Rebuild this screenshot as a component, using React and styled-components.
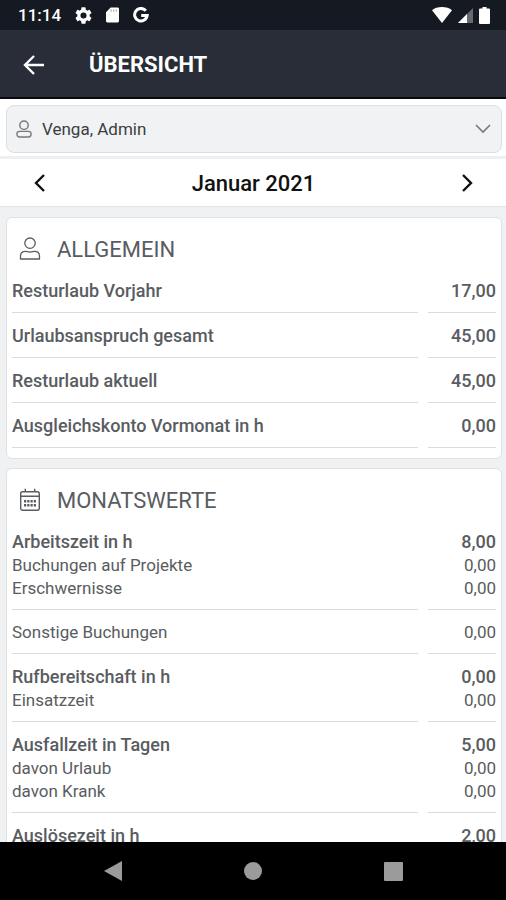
import React, { useState } from 'react';
import styled, { createGlobalStyle } from 'styled-components';

const GlobalStyle = createGlobalStyle`
  * {
    box-sizing: border-box;
  }

  body {
    margin: 0;
    font-family: Roboto, 'Liberation Sans', sans-serif;
    color: #595c61;
    background-color: #eff1f3;
  }

  button {
    display: flex;
    align-items: center;
    justify-content: center;
    padding: 0;
    border: none;
    background: none;
    color: inherit;
    cursor: pointer;
  }

  svg {
    display: block;
    flex-shrink: 0;
  }
`;

const Screen = styled.div`
  display: flex;
  flex-direction: column;
  height: 100vh;
`;

const StatusBar = styled.div`
  display: flex;
  align-items: center;
  justify-content: space-between;
  flex-shrink: 0;
  height: 30px;
  padding: 0 16px 0 18px;
  background-color: #151921;
  color: white;
`;

const StatusGroup = styled.div`
  display: flex;
  align-items: center;
  gap: ${(props) => props.$gap}px;
`;

const Clock = styled.span`
  font-size: 17px;
  line-height: 20px;
  font-weight: 500;
`;

const Header = styled.header`
  display: flex;
  align-items: center;
  flex-shrink: 0;
  gap: 40px;
  height: 69px;
  padding: 3px 19px 0;
  background-color: #282d37;
  border-bottom: 2px solid #08090c;
  color: white;
`;

const Title = styled.h1`
  margin: 0;
  font-size: 22px;
  line-height: 28px;
  font-weight: 700;
`;

const SelectBar = styled.div`
  flex-shrink: 0;
  padding: 6px 4px 3px 6px;
  background-color: white;
  border-bottom: 3px solid #eeeff0;
`;

const SelectBox = styled.label`
  display: flex;
  align-items: center;
  gap: 10px;
  height: 48px;
  padding: 0 10px 0 9px;
  border: 1px solid #dcdee0;
  border-radius: 8px;
  background-color: #f0f2f4;
  color: #77797c;
`;

const Select = styled.select`
  flex: 1;
  min-width: 0;
  padding: 0;
  border: none;
  background: none;
  appearance: none;
  outline: none;
  font-family: inherit;
  font-size: 17px;
  line-height: 24px;
  color: #3c3e41;
`;

const MonthBar = styled.div`
  display: flex;
  align-items: center;
  justify-content: space-between;
  flex-shrink: 0;
  height: 48px;
  padding: 0 24px 0 25px;
  background-color: white;
  border-bottom: 1px solid #e2e4e6;
  color: #111;
`;

const IconButton = styled.button`
  width: 30px;
  height: 30px;
`;

const Month = styled.h2`
  margin: 0;
  padding-top: 2px;
  font-size: 22px;
  line-height: 28px;
  font-weight: 500;
`;

const Content = styled.main`
  display: flex;
  flex-direction: column;
  flex: 1;
  gap: 9px;
  min-height: 0;
  padding: 10px 4px 10px 6px;
  overflow-y: auto;
  scrollbar-width: none;
`;

const Card = styled.section`
  flex-shrink: 0;
  padding: 13px 5px 10px;
  border: 1px solid #dfe2e5;
  border-radius: 6px;
  background-color: white;
`;

const CardHeader = styled.div`
  display: flex;
  align-items: center;
  gap: 16px;
  height: 36px;
  margin-bottom: 2px;
  padding-left: 7px;
`;

const CardTitle = styled.h3`
  margin: 0;
  padding-top: 2px;
  font-size: 22px;
  line-height: 28px;
  font-weight: 400;
`;

const Table = styled.table`
  display: block;
`;

const Group = styled.tbody`
  display: block;
`;

const Row = styled.tr`
  display: grid;
  grid-template-columns: 1fr 68px;
  column-gap: 10px;
  font-size: ${(props) => (props.$bold ? 18 : 17)}px;
  line-height: ${(props) => (props.$bold ? 24 : 23)}px;
  font-weight: ${(props) => (props.$bold ? 500 : 400)};

  th,
  td {
    padding: 0;
    font-weight: inherit;
    text-align: left;
  }

  td {
    text-align: right;
  }

  ${Group} > &:first-child > * {
    padding-top: 11px;
  }

  ${Group} > &:last-child > * {
    padding-bottom: 9px;
    border-bottom: 1px solid #d9dbdd;
  }

  ${Group}:first-of-type > &:first-child > * {
    padding-top: 10px;
  }
`;

const NavBar = styled.nav`
  display: flex;
  align-items: center;
  justify-content: space-around;
  flex-shrink: 0;
  height: 58px;
  padding: 0 43px;
  background-color: black;
  color: #9b9b9b;
`;

const UserIcon = () => (
  <svg width="22" height="24" viewBox="0 0 22 24" fill="none" stroke="currentColor" strokeWidth="1.3">
    <circle cx="11" cy="6.2" r="5.2" />
    <path
      d="M1.5 22v-2.6c0-3.3 2-5 4.8-5 1.700 0 2.600.7 4.700.7s3-.7 4.700-.7c2.800 0 4.800 1.700 4.800 5v2.600z"
      strokeLinejoin="round"
    />
  </svg>
);

const SelectUserIcon = () => (
  <svg width="16" height="18" viewBox="0 0 16 18" fill="none" stroke="currentColor" strokeWidth="1.4">
    <circle cx="8" cy="5.2" r="4.2" />
    <rect x="1" y="11.4" width="14" height="5.6" rx="2.4" />
  </svg>
);

const CalendarIcon = () => (
  <svg width="22" height="24" viewBox="0 0 22 24" fill="none" stroke="currentColor" strokeWidth="1.4">
    <rect x="1.7" y="3.7" width="18.6" height="18.6" rx="2" />
    <path d="M1.7 8.3h18.6M6.3 0.8v3M15.7 0.8v3" />
    <path d="M5 13.2h12M5 17.2h12" strokeWidth="2.4" strokeDasharray="2.2 1.06" />
  </svg>
);

const GearIcon = () => (
  <svg width="17" height="17" viewBox="2 2 20 20" fill="currentColor">
    <path d="M19.14 12.94c.04-.3.06-.61.06-.94 0-.32-.02-.64-.07-.94l2.03-1.58a.49.49 0 0 0 .12-.61l-1.92-3.32a.49.49 0 0 0-.59-.22l-2.39.96c-.5-.38-1.03-.7-1.62-.94l-.36-2.54a.48.48 0 0 0-.48-.41h-3.84c-.24 0-.43.17-.47.41l-.36 2.54c-.59.24-1.13.57-1.62.94l-2.39-.96a.48.48 0 0 0-.59.22L2.74 8.87c-.12.21-.08.47.12.61l2.03 1.58c-.05.3-.09.63-.09.94s.02.64.07.94l-2.03 1.58a.49.49 0 0 0-.12.61l1.92 3.32c.12.22.37.29.59.22l2.39-.96c.5.38 1.03.7 1.62.94l.36 2.54c.05.24.24.41.48.41h3.84c.24 0 .44-.17.47-.41l.36-2.54c.59-.24 1.13-.56 1.62-.94l2.39.96c.22.08.47 0 .59-.22l1.92-3.32a.48.48 0 0 0-.12-.61l-2.01-1.58zM12 15.6A3.6 3.6 0 1 1 12 8.4a3.6 3.6 0 0 1 0 7.2z" />
  </svg>
);

const SdCardIcon = () => (
  <svg width="13" height="16" viewBox="0 0 14 16">
    <path d="M5 0h7.5a1.5 1.5 0 0 1 1.5 1.5v13a1.5 1.5 0 0 1-1.5 1.5h-11a1.5 1.5 0 0 1-1.5-1.5V5z" fill="currentColor" />
    <path d="M5.5 2v2.5M8.3 2v2.5M11.1 2v2.5" stroke="#7b7e84" strokeWidth="0.8" />
  </svg>
);

const GoogleIcon = () => (
  <svg width="16" height="16" viewBox="0 0 16 16" fill="none" stroke="currentColor" strokeWidth="3">
    <path d="M12.8 3.7A6.3 6.3 0 1 0 14.2 8.4H8.2" />
  </svg>
);

const WifiIcon = () => (
  <svg width="20" height="16" viewBox="0 0 20 16" fill="currentColor">
    <path d="M0 3.2C2.6 1.2 6 0 10 0s7.4 1.2 10 3.2L10 16z" />
  </svg>
);

const SignalIcon = () => (
  <svg width="15" height="15" viewBox="0 0 15 15" fill="currentColor">
    <path d="M15 0v15H0z" opacity="0.35" />
    <path d="M9 6v9H0z" />
  </svg>
);

const BatteryIcon = () => (
  <svg width="11" height="17" viewBox="0 0 11 17" fill="currentColor">
    <path d="M3.5 0h4v1.5H10a1 1 0 0 1 1 1V16a1 1 0 0 1-1 1H1a1 1 0 0 1-1-1V2.5a1 1 0 0 1 1-1h2.5z" />
  </svg>
);

const BackArrow = () => (
  <svg width="22" height="20" viewBox="0 0 22 20" fill="none" stroke="currentColor" strokeWidth="2.4">
    <path d="M21 10H2.5M11 1L2 10l9 9" />
  </svg>
);

const Chevron = ({ points, width, height, strokeWidth }) => (
  <svg
    width={width}
    height={height}
    viewBox={`0 0 ${width} ${height}`}
    fill="none"
    stroke="currentColor"
    strokeWidth={strokeWidth}
  >
    <polyline points={points} />
  </svg>
);

const general = [
  [{ label: 'Resturlaub Vorjahr', value: '17,00', bold: true }],
  [{ label: 'Urlaubsanspruch gesamt', value: '45,00', bold: true }],
  [{ label: 'Resturlaub aktuell', value: '45,00', bold: true }],
  [{ label: 'Ausgleichskonto Vormonat in h', value: '0,00', bold: true }],
];

const monthly = [
  [
    { label: 'Arbeitszeit in h', value: '8,00', bold: true },
    { label: 'Buchungen auf Projekte', value: '0,00' },
    { label: 'Erschwernisse', value: '0,00' },
  ],
  [{ label: 'Sonstige Buchungen', value: '0,00' }],
  [
    { label: 'Rufbereitschaft in h', value: '0,00', bold: true },
    { label: 'Einsatzzeit', value: '0,00' },
  ],
  [
    { label: 'Ausfallzeit in Tagen', value: '5,00', bold: true },
    { label: 'davon Urlaub', value: '0,00' },
    { label: 'davon Krank', value: '0,00' },
  ],
  [{ label: 'Auslösezeit in h', value: '2,00', bold: true }],
];

const ValueCard = ({ icon, title, groups }) => (
  <Card>
    <CardHeader>
      {icon}
      <CardTitle>{title}</CardTitle>
    </CardHeader>
    <Table>
      {groups.map((rows) => (
        <Group key={rows[0].label}>
          {rows.map((row) => (
            <Row key={row.label} $bold={row.bold}>
              <th scope="row">{row.label}</th>
              <td>{row.value}</td>
            </Row>
          ))}
        </Group>
      ))}
    </Table>
  </Card>
);

const App = () => {
  const [user, setUser] = useState('admin');

  return (
    <Screen>
      <GlobalStyle />
      <StatusBar>
        <StatusGroup $gap={14}>
          <Clock>11:14</Clock>
          <GearIcon />
          <SdCardIcon />
          <GoogleIcon />
        </StatusGroup>
        <StatusGroup $gap={6}>
          <WifiIcon />
          <SignalIcon />
          <BatteryIcon />
        </StatusGroup>
      </StatusBar>
      <Header>
        <IconButton aria-label="Zurück">
          <BackArrow />
        </IconButton>
        <Title>ÜBERSICHT</Title>
      </Header>
      <SelectBar>
        <SelectBox>
          <SelectUserIcon />
          <Select aria-label="Mitarbeiter" value={user} onChange={(e) => setUser(e.target.value)}>
            <option value="admin">Venga, Admin</option>
          </Select>
          <Chevron points="1,1 8,8 15,1" width={16} height={10} strokeWidth={1.6} />
        </SelectBox>
      </SelectBar>
      <MonthBar>
        <IconButton aria-label="Vorheriger Monat">
          <Chevron points="10,1 2,9 10,17" width={12} height={18} strokeWidth={2.4} />
        </IconButton>
        <Month>Januar 2021</Month>
        <IconButton aria-label="Nächster Monat">
          <Chevron points="2,1 10,9 2,17" width={12} height={18} strokeWidth={2.4} />
        </IconButton>
      </MonthBar>
      <Content>
        <ValueCard icon={<UserIcon />} title="ALLGEMEIN" groups={general} />
        <ValueCard icon={<CalendarIcon />} title="MONATSWERTE" groups={monthly} />
      </Content>
      <NavBar>
        <IconButton aria-label="Zurück">
          <svg width="18" height="20" viewBox="0 0 18 20" fill="currentColor">
            <path d="M18 0v20L0 10z" />
          </svg>
        </IconButton>
        <IconButton aria-label="Startseite">
          <svg width="18" height="18" viewBox="0 0 18 18" fill="currentColor">
            <circle cx="9" cy="9" r="9" />
          </svg>
        </IconButton>
        <IconButton aria-label="Letzte Apps">
          <svg width="19" height="19" viewBox="0 0 19 19" fill="currentColor">
            <rect width="19" height="19" rx="1" />
          </svg>
        </IconButton>
      </NavBar>
    </Screen>
  );
};

export default App;
